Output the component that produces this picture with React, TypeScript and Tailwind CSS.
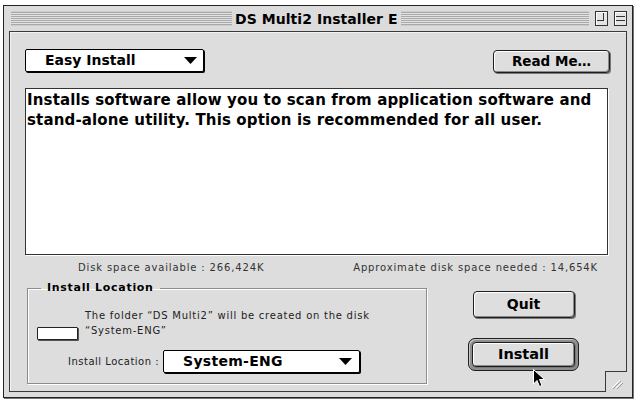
const stripes =
  "bg-[repeating-linear-gradient(to_bottom,#a9a9a9_0px,#a9a9a9_1px,#e2e2e2_1px,#e2e2e2_2px)]";

function PopupMenu({ label, className }: { label: string; className: string }) {
  return (
    <div
      className={`flex items-center justify-between bg-white border border-black rounded-[2px] shadow-[1px_1px_0_#000] ${className}`}
    >
      <span>{label}</span>
      <svg width="13" height="7" viewBox="0 0 13 7">
        <polygon points="0,0 13,0 6.5,7" fill="#000" />
      </svg>
    </div>
  );
}

function MacButton({ label, className }: { label: string; className: string }) {
  return (
    <div
      className={`flex items-center justify-center rounded-[4px] border border-[#1e1e1e] bg-[#dedede] shadow-[inset_1px_1px_0_#fff,inset_-1px_-1px_0_#8a8a8a,1px_1px_0_#777] font-bold ${className}`}
    >
      {label}
    </div>
  );
}

export default function App() {
  return (
    <div className="w-[637px] h-[401px] bg-white pt-[5px] pl-[3px] font-['DejaVu_Sans',Verdana,sans-serif] text-black">
      <div className="w-[630px] h-[393px] border border-[#222] bg-[#dcdcdc] shadow-[1px_1px_0_#777] flex flex-col">
        {/* title bar */}
        <div className="h-[25px] flex items-center pl-[7px] pr-[5px]">
          <div className={`w-[221px] h-[15px] ${stripes} border-y border-[#ccc]`} />
          <div className="px-[3px] font-bold text-[14px] leading-none tracking-[0.05px]">
            DS Multi2 Installer E
          </div>
          <div className={`flex-1 h-[15px] ${stripes} border-y border-[#ccc]`} />
          <div className="flex items-center gap-[6px] ml-[6px]">
            <div className="w-[13px] h-[15px] border border-[#333] bg-[#e4e4e4] shadow-[inset_1px_1px_0_#fff] relative">
              <div className="absolute left-[1px] top-[1px] w-[7px] h-[8px] border-r border-b border-[#333]" />
            </div>
            <div className="w-[13px] h-[15px] border border-[#333] bg-[#e4e4e4] shadow-[inset_1px_1px_0_#fff] flex flex-col justify-center gap-[3px] px-[1px]">
              <div className="h-px bg-[#333]" />
              <div className="h-px bg-[#333]" />
            </div>
          </div>
        </div>

        {/* content */}
        <div className="relative mx-[5px] mb-[5px] flex-1 border border-[#3a3a3a] shadow-[inset_1px_1px_0_#f2f2f2] bg-[#dddddd] pl-[15px] pr-[16px] pt-[17px]">
          <div className="flex justify-between items-start">
            <PopupMenu
              label="Easy Install"
              className="w-[179px] h-[23px] pl-[19px] pr-[6px] font-bold text-[14px]"
            />
            <MacButton label="Read Me…" className="w-[117px] h-[23px] mt-[1px] text-[13.5px]" />
          </div>

          <div className="mt-[15px] mr-[2px] h-[167px] bg-white border border-[#333] shadow-[1px_1px_0_#fff] px-[1px] pt-[1px] font-bold text-[15px] leading-[20px] tracking-[0.15px]">
            Installs software allow you to scan from application software and
            <br />
            stand-alone utility. This option is recommended for all user.
          </div>

          <div className="flex justify-between pl-[53px] pr-[12px] mt-[6px] h-[13px] text-[10px] leading-[13px] tracking-[0.85px] text-[#333]">
            <span>Disk space available : 266,424K</span>
            <span>Approximate disk space needed : 14,654K</span>
          </div>

          <div className="flex mt-[8px]">
            <fieldset className="ml-[2px] w-[400px] h-[102px] border border-[#8c8c8c] shadow-[inset_1px_1px_0_#fff,1px_1px_0_#fff] px-[9px] pb-[8px]">
              <legend className="ml-[4px] px-[6px] font-bold text-[11px] leading-[12px] tracking-[0.7px]">
                Install Location
              </legend>
              <div className="flex items-end mt-[14px]">
                <div className="w-[41px] h-[13px] border border-[#222] bg-white rounded-[1px] shadow-[1px_1px_0_#555] mb-[-2px]" />
                <div className="ml-[7px] text-[10px] leading-[15px] tracking-[0.75px] text-[#222]">
                  The folder “DS Multi2” will be created on the disk
                  <br />
                  “System-ENG”
                </div>
              </div>
              <div className="flex items-center mt-[12px]">
                <span className="ml-[31px] w-[95px] text-[10px] tracking-[0.5px] text-[#222]">
                  Install Location :
                </span>
                <PopupMenu
                  label="System-ENG"
                  className="w-[197px] h-[23px] pl-[19px] pr-[7px] font-bold text-[14px] tracking-[0.3px]"
                />
              </div>
            </fieldset>

            <div className="flex flex-col items-center ml-[41px] pt-[9px]">
              <MacButton label="Quit" className="w-[102px] h-[27px] text-[14px]" />
              <div className="mt-[20px] p-[3px] rounded-[7px] border border-[#1e1e1e] bg-[#8e8e8e] shadow-[inset_1px_1px_0_#c8c8c8]">
                <MacButton label="Install" className="w-[103px] h-[25px] text-[14.5px]" />
              </div>
            </div>
          </div>

          {/* grow box */}
          <div className="absolute -right-[1px] -bottom-[1px] w-[22px] h-[21px] bg-[#dcdcdc] border-l border-t border-[#3a3a3a]">
            <svg width="21" height="20" viewBox="0 0 21 20" className="block">
              <line x1="6" y1="16" x2="14" y2="8" stroke="#fff" strokeWidth="1" />
              <line x1="7" y1="17" x2="15" y2="9" stroke="#999" strokeWidth="1" />
              <line x1="10" y1="16" x2="16" y2="10" stroke="#fff" strokeWidth="1" />
              <line x1="11" y1="17" x2="17" y2="11" stroke="#999" strokeWidth="1" />
            </svg>
          </div>

          {/* mouse cursor */}
          <svg
            width="13"
            height="20"
            viewBox="0 0 13 20"
            className="absolute left-[523px] top-[337px]"
          >
            <path
              d="M0.5 0.5 L0.5 15 L4 11.5 L6.5 17.5 L9 16.5 L6.5 10.5 L11.5 10.5 Z"
              fill="#000"
              stroke="#fff"
              strokeWidth="1"
            />
          </svg>
        </div>
      </div>
    </div>
  );
}
